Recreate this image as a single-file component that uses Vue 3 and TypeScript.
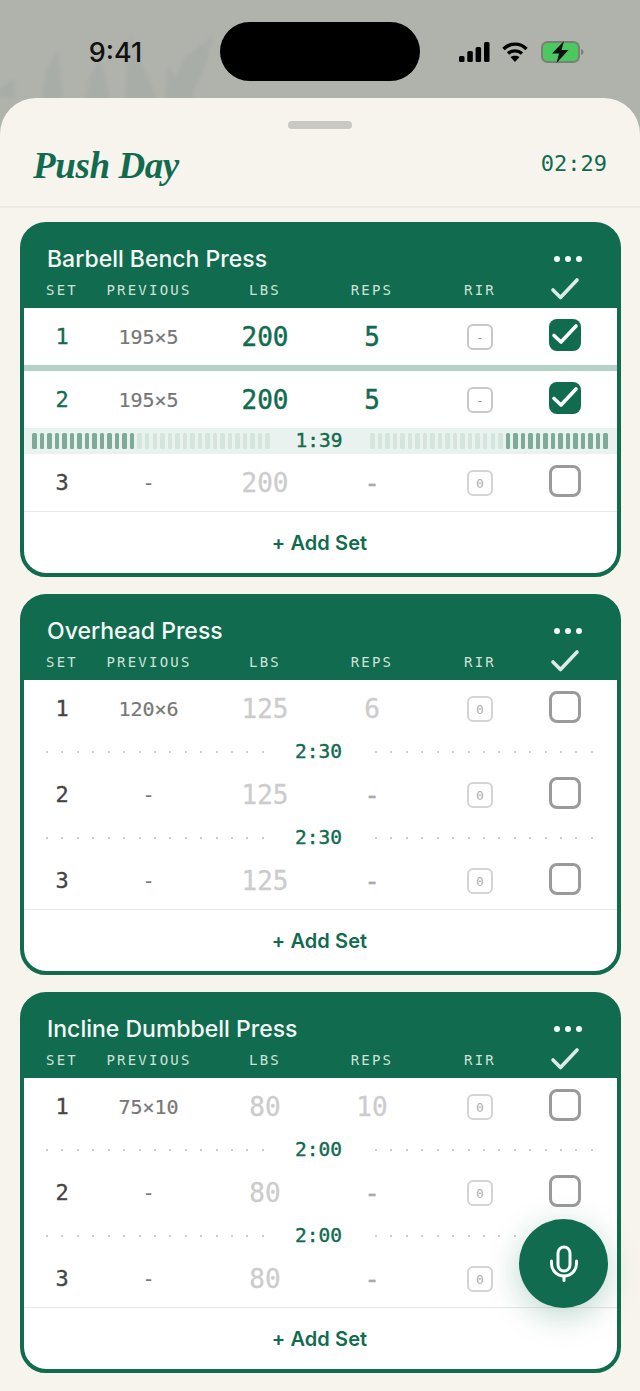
<script setup lang="ts">
type SetRow = { n: number; prev: string; lbs: string; reps: string; rir: string; done?: boolean; rest?: string; active?: boolean }
type Exercise = { name: string; rows: SetRow[] }

const columns = ['SET', 'PREVIOUS', 'LBS', 'REPS', 'RIR']

const exercises: Exercise[] = [
  {
    name: 'Barbell Bench Press',
    rows: [
      { n: 1, prev: '195×5', lbs: '200', reps: '5', rir: '-', done: true },
      { n: 2, prev: '195×5', lbs: '200', reps: '5', rir: '-', done: true, rest: '1:39', active: true },
      { n: 3, prev: '-', lbs: '200', reps: '-', rir: '0' },
    ],
  },
  {
    name: 'Overhead Press',
    rows: [
      { n: 1, prev: '120×6', lbs: '125', reps: '6', rir: '0', rest: '2:30' },
      { n: 2, prev: '-', lbs: '125', reps: '-', rir: '0', rest: '2:30' },
      { n: 3, prev: '-', lbs: '125', reps: '-', rir: '0' },
    ],
  },
  {
    name: 'Incline Dumbbell Press',
    rows: [
      { n: 1, prev: '75×10', lbs: '80', reps: '10', rir: '0', rest: '2:00' },
      { n: 2, prev: '-', lbs: '80', reps: '-', rir: '0', rest: '2:00' },
      { n: 3, prev: '-', lbs: '80', reps: '-', rir: '0' },
    ],
  },
]

// 32 bars on each side, the outer 14 are the elapsed ones
const leftBars = Array.from({ length: 32 }, (_, i) => i < 14)
const rightBars = Array.from({ length: 32 }, (_, i) => i >= 18)
</script>

<template>
  <div class="phone">
    <div class="status">
      <svg class="fern" width="230" height="76" viewBox="0 0 230 76">
        <path d="M0 76 V66 L14 58 L15 76 Z M42 76 L46 50 L57 30 L60 50 L62 76 Z M85 76 L90 55 L100 38 L106 60 L110 76 Z M125 76 L130 15 L140 40 L157 76 Z M165 76 L168 45 L175 55 L185 35 L213 15 L205 45 L195 65 L192 76 Z" fill="#a8ada7" />
      </svg>
      <span class="clock">9:41</span>
      <div class="island"></div>
      <div class="sys">
        <svg width="31" height="20" viewBox="0 0 31 20">
          <rect x="0" y="14" width="5.5" height="6" rx="1.5" />
          <rect x="8.3" y="9" width="5.5" height="11" rx="1.5" />
          <rect x="16.6" y="5" width="5.5" height="15" rx="1.5" />
          <rect x="25" y="0" width="5.5" height="20" rx="1.5" />
        </svg>
        <svg width="26" height="20" viewBox="0 0 26 20" fill="none" stroke="#000" stroke-width="3.400">
          <path d="M1.500 7 C8 0.500 18 0.500 24.500 7" />
          <path d="M6 11.500 C10 8 16 8 20 11.500" />
          <path d="M13 20 L8.500 15 C11 13.200 15 13.200 17.500 15 Z" fill="#000" stroke="none" />
        </svg>
        <svg class="batt" width="43" height="22" viewBox="0 0 43 22">
          <rect x="1" y="1" width="37" height="20" rx="5.5" fill="#4bc960" stroke="#7b7f78" stroke-width="2" />
          <path d="M40 8 C42 8.500 42.500 10 42.500 11 C42.500 12 42 13.500 40 14 Z" fill="#7b7f78" />
          <path d="M23 0 L11 12.500 L18 12.500 L15.500 22 L27.500 9 L20.500 9 Z" fill="#111" />
        </svg>
      </div>
    </div>

    <div class="sheet">
      <div class="handle"></div>
      <header class="top">
        <h1>Push Day</h1>
        <span class="elapsed">02:29</span>
      </header>

      <div class="list">
        <section v-for="ex in exercises" :key="ex.name" class="card">
          <div class="card-head">
            <div class="title-line">
              <h2>{{ ex.name }}</h2>
              <div class="more"><i></i><i></i><i></i></div>
            </div>
            <div class="grid labels">
              <span v-for="c in columns" :key="c">{{ c }}</span>
              <span class="head-check">
                <svg width="30" height="24" viewBox="0 0 30 24" fill="none" stroke="#dcebe4" stroke-width="3.600" stroke-linecap="round" stroke-linejoin="round">
                  <path d="M3 13 L10.500 20.500 L27 3" />
                </svg>
              </span>
            </div>
          </div>

          <div class="card-body">
            <template v-for="row in ex.rows" :key="row.n">
              <div class="grid row" :class="{ done: row.done }">
                <span class="num">{{ row.n }}</span>
                <span class="prev">{{ row.prev }}</span>
                <span class="val" :class="{ dash: row.lbs === '-' }">{{ row.lbs }}</span>
                <span class="val" :class="{ dash: row.reps === '-' }">{{ row.reps }}</span>
                <span class="rir-cell"><span class="rir" :class="{ blank: row.rir === '-' }">{{ row.rir }}</span></span>
                <span class="box-cell">
                  <span class="box">
                    <svg v-if="row.done" width="32" height="32" viewBox="0 0 32 32" fill="none" stroke="#fff" stroke-width="3.600" stroke-linecap="round" stroke-linejoin="round">
                      <path d="M5 16.500 L12 23 L27 7" />
                    </svg>
                  </span>
                </span>
              </div>
              <div v-if="row.done && !row.rest" class="sep"></div>
              <div v-if="row.rest && row.active" class="strip">
                <div class="bars">
                  <i v-for="(on, i) in leftBars" :key="i" :class="{ on }"></i>
                </div>
                <b>{{ row.rest }}</b>
                <div class="bars">
                  <i v-for="(on, i) in rightBars" :key="i" :class="{ on }"></i>
                </div>
              </div>
              <div v-else-if="row.rest" class="rest">
                <div class="dots"><i v-for="d in 15" :key="d"></i></div>
                <b>{{ row.rest }}</b>
                <div class="dots"><i v-for="d in 15" :key="d"></i></div>
              </div>
            </template>

            <div class="add">+ Add Set</div>
          </div>
        </section>
      </div>
    </div>

    <button class="fab" aria-label="Voice">
      <svg width="30" height="38" viewBox="0 0 30 38" fill="none" stroke="#fff" stroke-width="3" stroke-linecap="round">
        <rect x="9" y="2" width="12" height="24" rx="6" />
        <path d="M2.500 16 V18.500 A12.500 12.500 0 0 0 27.500 18.500 V16" />
        <path d="M15 31.500 V35.500" />
      </svg>
    </button>
  </div>
</template>

<style scoped>
.phone {
  position: relative;
  width: 640px;
  height: 1391px;
  overflow: hidden;
  background: #b0b2ac;
  font-family: Inter, "Liberation Sans", sans-serif;
}

.status {
  position: relative;
  height: 98px;
  box-sizing: border-box;
  padding-top: 22px;
  display: flex;
  align-items: flex-start;
}

.fern {
  position: absolute;
  left: 0;
  top: 22px;
  filter: blur(1.500px);
}

.clock {
  width: 220px;
  padding: 14px 0 0 11px;
  text-align: center;
  box-sizing: border-box;
  font-size: 27px;
  line-height: 34px;
  font-weight: 500;
  color: #111;
  position: relative;
}

.island {
  width: 200px;
  height: 59px;
  border-radius: 30px;
  background: #000;
  position: relative;
}

.sys {
  position: relative;
  display: flex;
  align-items: center;
  gap: 12px;
  margin-left: 39px;
  margin-top: 19px;
}

.batt {
  margin-left: 1px;
}

.sheet {
  height: 1293px;
  background: #f7f4ee;
  border-radius: 36px 36px 0 0;
  position: relative;
}

.handle {
  width: 64px;
  height: 8px;
  margin: 0 auto;
  position: relative;
  top: 23px;
  border-radius: 4px;
  background: #c9c8c4;
}

.top {
  height: 102px;
  box-sizing: border-box;
  display: flex;
  align-items: center;
  justify-content: space-between;
  padding: 18px 33px 0;
  border-bottom: 2px solid #eceae5;
}

h1 {
  margin: 0;
  font-family: "Liberation Serif", serif;
  font-style: italic;
  font-weight: 700;
  font-size: 37px;
  color: #116b4f;
  letter-spacing: -0.4px;
}

.elapsed {
  font-family: "DejaVu Sans Mono", monospace;
  font-size: 22px;
  color: #116b4f;
  margin-bottom: 3px;
}

.list {
  padding: 14px 19px 0 20px;
  display: flex;
  flex-direction: column;
  gap: 17px;
}

.card {
  border: 4px solid #116b4f;
  border-radius: 26px;
  background: #116b4f;
}

.card-head {
  height: 82px;
  box-sizing: border-box;
  padding-top: 14px;
}

.card-body {
  background: #fff;
  border-radius: 0 0 22px 22px;
  overflow: hidden;
}

.title-line {
  height: 37px;
  display: flex;
  align-items: center;
  justify-content: space-between;
  padding: 0 35px 0 23px;
}

h2 {
  margin: 0;
  font-size: 23px;
  font-weight: 500;
  color: #f4f8f5;
}

.more {
  display: flex;
  gap: 5px;
}

.more i {
  width: 6px;
  height: 6px;
  border-radius: 50%;
  background: #f4f8f5;
}

.grid {
  display: grid;
  grid-template-columns: 76px 98px 134px 80px 136px 34px;
  align-items: center;
  justify-items: center;
}

.labels {
  height: 26px;
  font-family: "DejaVu Sans Mono", monospace;
  font-size: 14px;
  letter-spacing: 2.200px;
  color: #cfe2da;
}

.head-check {
  display: flex;
  margin-top: -2px;
}

.row {
  height: 57px;
  font-family: "DejaVu Sans Mono", monospace;
}

.num {
  font-size: 22px;
  color: #444;
  -webkit-text-stroke: 0.3px currentColor;
}

.prev {
  font-size: 20px;
  color: #777;
  -webkit-text-stroke: 0.2px currentColor;
  margin-right: 1px;
}

.val {
  font-size: 26px;
  color: #ccc;
  -webkit-text-stroke: 0.3px currentColor;
}

.val.dash {
  color: #aaa;
}

.done .num,
.done .val {
  color: #116b4f;
}

.done .val {
  -webkit-text-stroke: 0.45px currentColor;
}

.rir-cell,
.box-cell {
  display: flex;
}

.rir {
  width: 26px;
  height: 26px;
  box-sizing: border-box;
  border: 2.500px solid #d4d4d4;
  border-radius: 6px;
  display: flex;
  align-items: center;
  justify-content: center;
  font-size: 13px;
  color: #b0b0b0;
  margin-top: 1px;
}

.rir.blank {
  border-color: #c8c8c8;
  color: #999;
}

.box {
  width: 32px;
  height: 32px;
  box-sizing: border-box;
  border: 3px solid #9a9a9a;
  border-radius: 8px;
  display: block;
  margin-top: -3px;
}

.done .box {
  border: 0;
  background: #116b4f;
}

.done .box svg {
  display: block;
}

.sep {
  height: 6px;
  background: #b3d3c6;
}

.strip {
  height: 26px;
  background: #e9f2ee;
  display: flex;
  align-items: center;
  justify-content: space-between;
  padding: 0 9px 0 8px;
}

.strip b,
.rest b {
  font-family: "DejaVu Sans Mono", monospace;
  font-weight: 400;
  font-size: 19.500px;
  color: #116b4f;
  -webkit-text-stroke: 0.4px currentColor;
  margin-right: 2px;
}

.strip b {
  margin-bottom: 2px;
}

.bars {
  width: 238px;
  display: flex;
  justify-content: space-between;
}

.bars i {
  width: 4.500px;
  height: 16px;
  border-radius: 1.500px;
  background: #d4e5de;
}

.bars i.on {
  background: #7cab99;
}

.rest {
  height: 29px;
  display: flex;
  align-items: center;
  justify-content: space-between;
  padding: 0 24px 0 22px;
}

.dots {
  width: 218px;
  display: flex;
  justify-content: space-between;
}

.dots i {
  width: 2px;
  height: 2px;
  border-radius: 50%;
  background: #bdbdbd;
}

.add {
  height: 61px;
  box-sizing: content-box;
  padding: 0 2px 0 0;
  border-top: 1px solid #e8e8e6;
  display: flex;
  align-items: center;
  justify-content: center;
  font-size: 20px;
  line-height: 20px;
  font-weight: 600;
  letter-spacing: 0.1px;
  color: #116b4f;
}

.add::after {
  content: "";
  display: block;
  height: 3px;
}

.fab {
  position: absolute;
  left: 519px;
  top: 1219px;
  width: 89px;
  height: 89px;
  padding: 0;
  border: 0;
  border-radius: 50%;
  background: #116b4f;
  display: flex;
  align-items: center;
  justify-content: center;
  box-shadow: 0 8px 32px rgba(17, 107, 79, 0.28);
}
</style>
